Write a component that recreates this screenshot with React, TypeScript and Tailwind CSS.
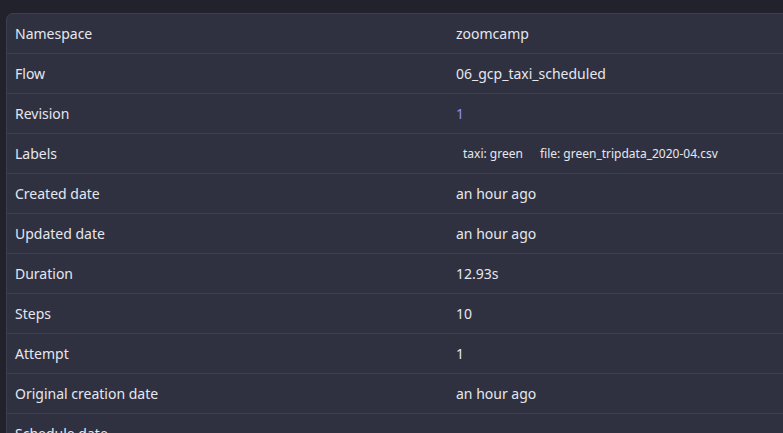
import React from "react";

const rows: { k: string; v: React.ReactNode }[] = [
  { k: "Namespace", v: "zoomcamp" },
  { k: "Flow", v: "06_gcp_taxi_scheduled" },
  { k: "Revision", v: <span className="text-[#8f90f6]">1</span> },
  {
    k: "Labels",
    v: (
      <div className="flex gap-[3px] text-[12px]">
        <span className="px-[7px]">taxi: green</span>
        <span className="px-[7px]">file: green_tripdata_2020-04.csv</span>
      </div>
    ),
  },
  { k: "Created date", v: "an hour ago" },
  { k: "Updated date", v: "an hour ago" },
  { k: "Duration", v: "12.93s" },
  { k: "Steps", v: "10" },
  { k: "Attempt", v: "1" },
  { k: "Original creation date", v: "an hour ago" },
  { k: "Schedule date", v: "" },
];

export default function App() {
  return (
    <div
      className="w-[783px] h-[433px] overflow-hidden bg-[#21222c] pt-[13px] pl-[6px]"
      style={{ fontFamily: '"Noto Sans", Roboto, sans-serif' }}
    >
      <div className="w-[882px] rounded-tl-[7px] border border-[#3c3f50] bg-[#2f3141] text-[14px] text-[#e6e7ee]">
        {rows.map((r) => (
          <div
            key={r.k}
            className="grid grid-cols-[441px_1fr] h-[40px] border-b border-[#3c3f50] items-center"
          >
            <div className="pl-[8px]">{r.k}</div>
            <div className="pl-[8px]">{r.v}</div>
          </div>
        ))}
      </div>
    </div>
  );
}
